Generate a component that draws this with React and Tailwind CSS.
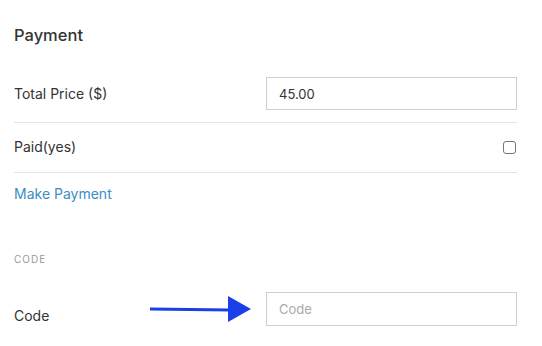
export default function App() {
  return (
    <div className="w-[542px] h-[346px] bg-white overflow-hidden" style={{ fontFamily: "Inter, 'Noto Sans', sans-serif" }}>
      <div className="pl-[14px] w-[517px]">
        <div className="h-[65px] pt-[25px]">
          <div className="text-[16.5px] leading-[20px] font-medium text-[#333]">Payment</div>
        </div>
        <div className="flex items-center justify-between py-[12px] border-b border-[#e3e3e3]">
          <div className="text-[14px] text-[#333]">Total Price ($)</div>
          <input
            readOnly
            value="45.00"
            className="w-[251px] h-[33px] border border-[#cfcfcf] px-[12px] text-[13px] text-[#333] outline-none"
            style={{ fontFamily: "Inter, sans-serif" }}
          />
        </div>
        <div className="flex items-center justify-between h-[50px] border-b border-[#e3e3e3]">
          <div className="text-[14px] text-[#333] -mt-[3px]">Paid(yes)</div>
          <div className="w-[13px] h-[13px] border border-[#777] rounded-[3px] mr-[1px]" />
        </div>
        <div className="pt-[10px] h-[65px]">
          <div className="text-[14px] text-[#3d8dbf]">Make Payment</div>
        </div>
        <div className="text-[10px] tracking-[1px] text-[#999] leading-[12px] mt-[15px]">CODE</div>
        <div className="flex items-center mt-[27px]">
          <div className="text-[14px] text-[#333] w-[136px] mt-[12px]">Code</div>
          <svg width="102" height="28" viewBox="0 0 102 28" className="mr-[14px]">
            <line x1="0" y1="14" x2="80" y2="15" stroke="#1a3fe8" strokeWidth="3" strokeLinecap="round" />
            <polygon points="78,1 101,14 78,27" fill="#1a3fe8" />
          </svg>
          <input
            readOnly
            placeholder="Code"
            className="w-[251px] h-[34px] border border-[#cfcfcf] px-[12px] text-[13px] text-[#333] placeholder:text-[#aaa] outline-none"
            style={{ fontFamily: "Inter, sans-serif" }}
          />
        </div>
      </div>
    </div>
  );
}
